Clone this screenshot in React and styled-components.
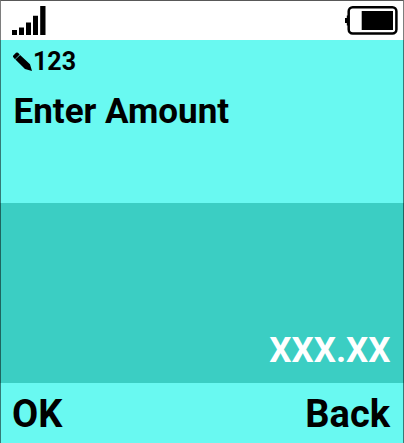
import React from "react";
import styled, { createGlobalStyle } from "styled-components";

const GlobalStyle = createGlobalStyle`
  * { box-sizing: border-box; }
  body { margin: 0; }
`;

const Screen = styled.main`
  width: 404px;
  height: 443px;
  display: grid;
  grid-template-rows: 40px 163px 179.5px 60.5px;
  overflow: hidden;
  background: #69f9f1;
  color: #000;
  font-family: Roboto, sans-serif;
  font-weight: 700;
  white-space: nowrap;
  position: relative;

  &::after {
    content: "";
    position: absolute;
    inset: 0;
    border: 1px solid rgba(0, 0, 0, 0.65);
    border-bottom: 0;
    border-left-color: rgba(0, 0, 0, 0.5);
    border-right-color: rgba(0, 0, 0, 0.5);
  }
`;

const StatusBar = styled.header`
  display: flex;
  justify-content: space-between;
  align-items: flex-start;
  padding: 6px 6px 0 12px;
  background: #fff;
`;

const Prompt = styled.section`
  padding: 10px 13px 0;
`;

const InputMode = styled.div`
  display: flex;
  align-items: center;
  height: 24px;
`;

const Label = styled.div`
  font-size: ${({ $size }) => $size}px;
  line-height: ${({ $line }) => $line}px;
`;

const Title = styled.h1`
  margin: 17px 0 0 0.5px;
  font-size: 35px;
  font-weight: 700;
  line-height: 42px;
`;

const AmountField = styled.section`
  display: flex;
  justify-content: flex-end;
  align-items: flex-end;
  padding: 0 13.5px 11px;
  background: #3bcec3;
  color: #fff;
`;

const SoftKeys = styled.footer`
  display: flex;
  justify-content: space-between;
  align-items: flex-start;
  padding: 8.5px 14px 0 12px;
`;

const SoftKey = styled.button`
  padding: 0;
  border: 0;
  background: none;
  color: inherit;
  font: 700 38px/46px Roboto, sans-serif;
`;

const SignalIcon = () => (
  <svg width="35" height="30" viewBox="0 0 35 30">
    <path d="M0 24h5v5H0zM7 21.5h5V29H7zM14 16.5h5V29h-5zM21 9.8h5V29h-5zM28.2 0h5.3v29h-5.3z" />
  </svg>
);

const BatteryIcon = () => (
  <svg width="53" height="30" viewBox="0 0 53 30">
    <rect x="3.7" y="1.3" width="47.7" height="26.3" rx="4" fill="none" stroke="#000" strokeWidth="2.5" />
    <path d="M4 9.5H1.8V12H0v5h1.8v2.5H4z" />
    <path d="M16.7 5H48v19H16.7z" />
  </svg>
);

const PencilIcon = () => (
  <svg width="20" height="20" viewBox="0 0 20 20">
    <path d="M.3 3.5 3 .8Q4 0 5 .8L6.7 2.5 2 7.2.3 5.3Q-.4 4.4.3 3.5zM2.4 7.6 7.1 2.9 17 12.3 19 19 12 17z" />
  </svg>
);

export default function App() {
  return (
    <>
      <GlobalStyle />
      <Screen>
        <StatusBar>
          <SignalIcon />
          <BatteryIcon />
        </StatusBar>
        <Prompt>
          <InputMode>
            <PencilIcon />
            <Label $size={25} $line={24}>123</Label>
          </InputMode>
          <Title>Enter Amount</Title>
        </Prompt>
        <AmountField>
          <Label $size={35} $line={42}>XXX.XX</Label>
        </AmountField>
        <SoftKeys>
          <SoftKey>OK</SoftKey>
          <SoftKey>Back</SoftKey>
        </SoftKeys>
      </Screen>
    </>
  );
}
